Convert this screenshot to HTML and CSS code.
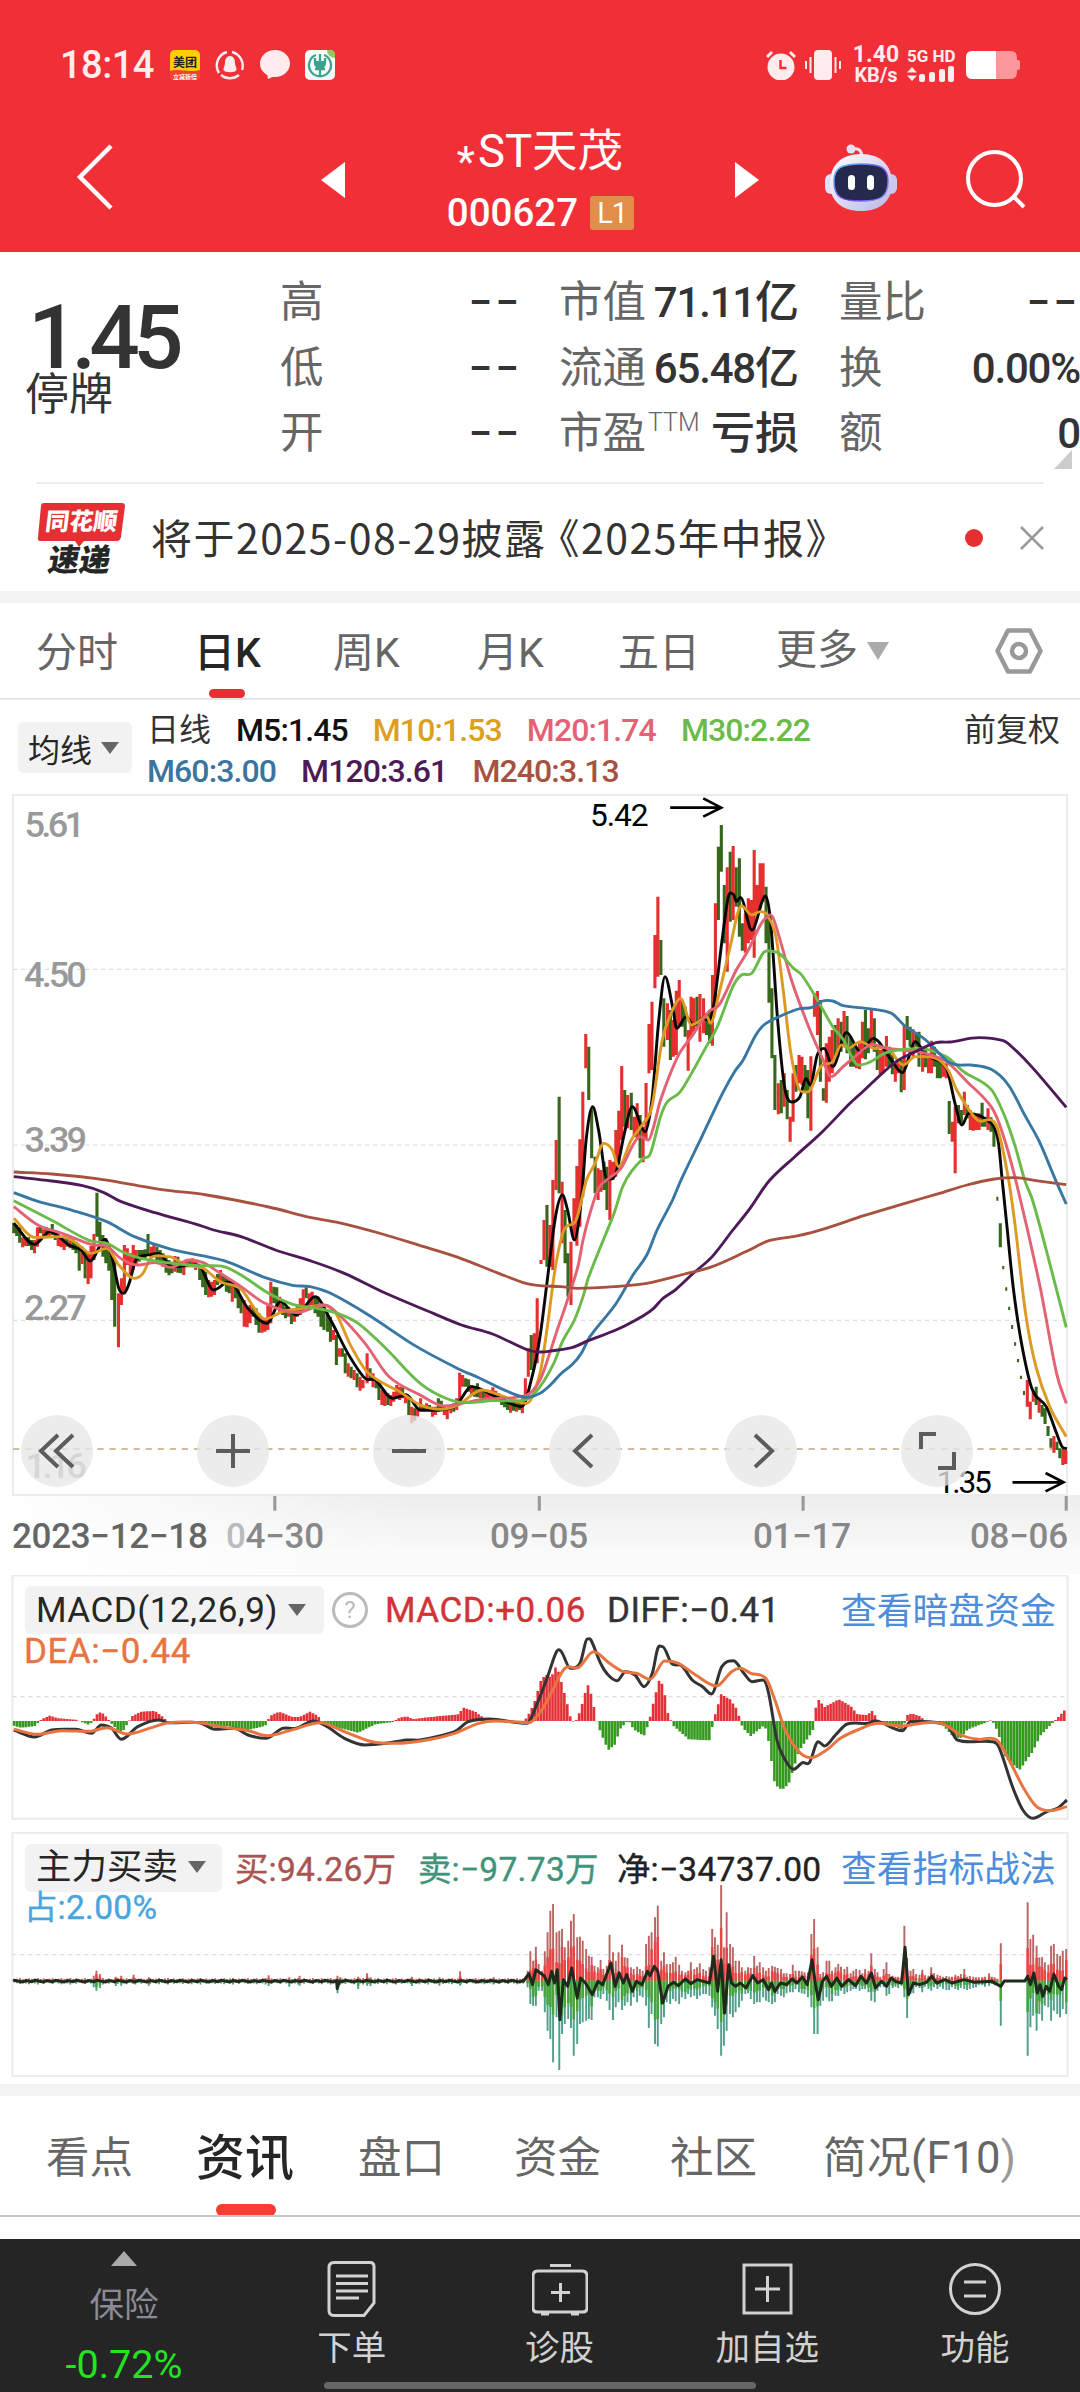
FILE: index.html
```html
<!DOCTYPE html>
<html lang="zh-CN">
    <head>
        <meta charset="utf-8">
        <meta name="viewport" content="width=device-width, initial-scale=1.0">
        <title>*ST天茂 000627</title>
        <link rel="stylesheet" href="styles.css">
    </head>
    <body>
        <header class="header">
            <div class="statusbar">
                <span class="clock">18:14</span>
                <svg class="app-icon" viewBox="0 0 30 30">
                    <rect width="30" height="30" rx="5" fill="#ffd000"/>
                    <path d="M0 21 C8 18 20 23 30 20 V25 a5 5 0 0 1-5 5 H5 a5 5 0 0 1-5-5z" fill="#f0432e"/>
                    <text x="15" y="16.5" font-size="12" font-weight="700" fill="#222" text-anchor="middle">美团</text>
                    <text x="15" y="28.5" font-size="6" font-weight="700" fill="#fff" text-anchor="middle">立减新倍</text>
                </svg>
                <svg class="app-icon" viewBox="0 0 30 30" fill="none" stroke="#ffecee" stroke-width="2.4">
                    <path d="M4 23 A14 14 0 0 1 12 2"/>
                    <path d="M17 2 A14 14 0 0 1 27 20"/>
                    <path d="M24 25 A14 14 0 0 1 6 25"/>
                    <path d="M15 6c-4 0-5 4-5 7 0 3-2 5-1.500 7 1 3 12 3 13 0 .5-2-1.500-4-1.500-7 0-3-1-7-5-7z" fill="#ffecee" stroke="none"/>
                </svg>
                <svg class="app-icon" viewBox="0 0 30 30">
                    <ellipse cx="15" cy="13.500" rx="15" ry="13.500" fill="#ffecee"/>
                    <path d="M7 23 L8 29 L17 25z" fill="#ffecee"/>
                </svg>
                <svg class="app-icon" viewBox="0 0 30 30">
                    <rect width="30" height="30" rx="5" fill="#f7fbfa"/>
                    <path d="M22 0h3a5 5 0 0 1 5 5v3a8 8 0 0 1-8-8z" fill="#8ccc5a"/>
                    <g fill="none" stroke="#3aa38f" stroke-width="2.300">
                        <path d="M11 5 A11 11 0 1 0 19 5"/>
                        <path d="M15 4V26M10 8v5q0 4 5 4t5-4V8M10 19h10"/>
                    </g>
                    <path d="M11 11h8v8h-8z" fill="#3aa38f"/>
                </svg>
                <span class="spacer"></span>
                <svg class="alarm" viewBox="0 0 30 30" fill="#ffecee">
                    <circle cx="15" cy="17" r="13.500"/>
                    <path d="M1 7 L6 2M29 7 L24 2" stroke="#ffecee" stroke-width="3"/>
                    <path d="M14.500 10v8h6" fill="none" stroke="#f12f37" stroke-width="2.500"/>
                </svg>
                <svg class="vibrate" viewBox="0 0 36 30" fill="#ffecee">
                    <rect x="9" y="0" width="18" height="30" rx="4"/>
                    <path d="M1 11v8M5.500 7v16M30.500 7v16M35 11v8" stroke="#ffecee" stroke-width="2"/>
                </svg>
                <span class="speed">1.40<br>KB/s</span>
                <div class="network">
                    <span>5G HD</span>
                    <svg viewBox="0 0 48 16" fill="#ffecee">
                        <path d="M0 6.500 5 1l5 5.500zM0 9.500 5 15l5-5.500z"/>
                        <rect x="12" y="8" width="6" height="8" rx="2"/>
                        <rect x="22" y="6" width="6" height="10" rx="2"/>
                        <rect x="32" y="3" width="6" height="13" rx="2"/>
                        <rect x="41" y="0" width="6" height="16" rx="2"/>
                    </svg>
                </div>
                <svg class="battery" viewBox="0 0 54 28">
                    <path d="M6 0h39q6 0 6 7v2h1q2 0 2 2v6q0 2-2 2h-1v2q0 7-6 7H6q-6 0-6-7V7Q0 0 6 0z" fill="#fa979b"/>
                    <path d="M30 0H6Q0 0 0 7v14q0 7 6 7h24z" fill="#fff"/>
                </svg>
            </div>
            <div class="titlebar">
                <svg class="back" viewBox="0 0 38 66"><path d="M35 2 4 33 35 64" fill="none" stroke="#fff" stroke-width="4.500"/></svg>
                <svg class="prev" viewBox="0 0 24 36"><path d="M24 0v36L0 18z" fill="#fff"/></svg>
                <div class="name">
                    <h1><span class="star">*</span>ST天茂</h1>
                    <p>000627<span class="level">L1</span></p>
                </div>
                <svg class="next" viewBox="0 0 24 36"><path d="M0 0v36l24-18z" fill="#fff"/></svg>
                <svg class="robot" viewBox="0 0 72 68">
                    <defs>
                        <linearGradient id="shell" x1="0" y1="0" x2="1" y2="1">
                            <stop offset="0" stop-color="#fff"/>
                            <stop offset="1" stop-color="#b9b6e6"/>
                        </linearGradient>
                        <linearGradient id="rim" x1="0" y1="0" x2="1" y2="1">
                            <stop offset="0" stop-color="#54cdf2"/>
                            <stop offset="0.600" stop-color="#7a3ff0"/>
                            <stop offset="1" stop-color="#8aa0ff"/>
                        </linearGradient>
                    </defs>
                    <path d="M27 5q9-2 10 7" fill="none" stroke="#e4e0f4" stroke-width="3"/>
                    <circle cx="26" cy="5" r="4.500" fill="#e4e0f4"/>
                    <rect x="0" y="30" width="12" height="20" rx="6" fill="#e2e2f6"/>
                    <rect x="60" y="30" width="12" height="20" rx="6" fill="#c9c8ee"/>
                    <path d="M36 10C56 10 67 21 67 40 67 57 55 67 36 67S5 57 5 40C5 21 16 10 36 10z" fill="url(#shell)"/>
                    <path d="M36 20c20 0 27 4 27 17 0 16-7 20-27 20S9 53 9 37c0-13 7-17 27-17z" fill="#232a4d" stroke="url(#rim)" stroke-width="1.500"/>
                    <rect x="23" y="31" width="7" height="15" rx="3.500" fill="#fff"/>
                    <rect x="42" y="31" width="7" height="15" rx="3.500" fill="#fff"/>
                </svg>
                <svg class="search" viewBox="0 0 60 60" fill="none" stroke="#fff" stroke-width="4"><circle cx="28.500" cy="28.500" r="26.500"/><path d="M48 47 58 57"/></svg>
            </div>
        </header>

        <section class="quote">
            <div class="price">
                <strong>1.45</strong>
                <span>停牌</span>
            </div>
            <dl class="stats">
                <dt>高</dt><dd class="empty">−−</dd>
                <dt>市值</dt><dd>71.11<i>亿</i></dd>
                <dt>量比</dt><dd class="empty">−−</dd>
                <dt>低</dt><dd class="empty">−−</dd>
                <dt>流通</dt><dd>65.48<i>亿</i></dd>
                <dt>换</dt><dd>0.00%</dd>
                <dt>开</dt><dd class="empty">−−</dd>
                <dt>市盈<sup>TTM</sup></dt><dd><i>亏损</i></dd>
                <dt>额</dt><dd>0</dd>
            </dl>
            <svg class="corner" viewBox="0 0 18 19"><path d="M18 0v19H0z" fill="#ccc"/></svg>
        </section>

        <section class="news">
            <svg class="news-logo" viewBox="0 0 90 74">
                <path d="M8 2h78q3 0 3 3l-4 31q-1 4-4 4H48l-5 6-4-6H5q-4 0-3-4L5 5q0-3 3-3z" fill="#e62f33"/>
                <text x="45" y="29" font-size="24" font-weight="900" fill="#fff" text-anchor="middle" transform="skewX(-7) translate(3 0)">同花顺</text>
                <text x="45" y="70" font-size="31" font-weight="900" fill="#262626" text-anchor="middle" transform="skewX(-10) translate(9 0)">速递</text>
            </svg>
            <p>将于2025-08-29披露<span class="title-mark">《2025年中报》</span></p>
            <span class="dot"></span>
            <svg class="close" viewBox="0 0 24 24"><path d="M1 1 23 23M23 1 1 23" stroke="#999" stroke-width="2.500"/></svg>
        </section>

        <nav class="periods">
            <a>分时</a>
            <a class="on">日K</a>
            <a>周K</a>
            <a>月K</a>
            <a>五日</a>
            <a class="more">更多<svg viewBox="0 0 22 18"><path d="M0 0h22L11 18z" fill="#aaa"/></svg></a>
            <svg class="setting" viewBox="0 0 48 46" fill="none" stroke="#999" stroke-width="4.500" stroke-linejoin="round"><path d="M13 2.500h22L45.500 23 35 43.500H13L2.500 23z"/><circle cx="24" cy="23" r="7"/></svg>
        </nav>

        <section class="averages">
            <div class="picker">均线<svg viewBox="0 0 18 12"><path d="M0 0h18L9 12z" fill="#666"/></svg></div>
            <div class="legend">
                <p><span class="cjk">日线</span><span class="m5">M5:1.45</span><span class="m10">M10:1.53</span><span class="m20">M20:1.74</span><span class="m30">M30:2.22</span></p>
                <p><span class="m60">M60:3.00</span><span class="m120">M120:3.61</span><span class="m240">M240:3.13</span></p>
            </div>
            <span class="adjust">前复权</span>
        </section>

        <section class="kline">
            <svg class="kline-chart" viewBox="0 42 3136 2160" preserveAspectRatio="none">
                <path class="frame" d="M38 45H3098V2145H38z"/>
                <path class="grid" d="M38 568H3098M38 1095H3098M38 1621H3098"/>
                <g class="scale">
                    <text x="71" y="170" textLength="176">5.61</text>
                    <text x="70" y="620" textLength="182">4.50</text>
                    <text x="71" y="1117" textLength="182">3.39</text>
                    <text x="70" y="1620" textLength="182">2.27</text>
                    <text x="74" y="2095" textLength="178">1.16</text>
                </g>
                <path class="last" d="M38 2007H3098"/>
                <path id="falls" class="falls"/>
                <path id="rises" class="rises"/>
                <g id="lines" class="lines"></g>
                <g class="extreme">
                    <text x="1713" y="138" textLength="170">5.42</text>
                    <path d="M1946 83H2092M2042 55 2094 83 2042 110"/>
                    <text x="2720" y="2138" textLength="160">1.35</text>
                    <path d="M2940 2107H3086M3036 2079 3088 2107 3036 2134"/>
                </g>
                <path class="ticks" d="M798 2148v44M1566 2148v44M2332 2148v44M3096 2148v44"/>
            </svg>
            <div class="tools">
                <button><svg viewBox="0 0 72 72"><path d="M37 20 20 36 37 52M52 20 35 36 52 52"/></svg></button>
                <button><svg viewBox="0 0 72 72"><path d="M36 19V53M19 36H53"/></svg></button>
                <button><svg viewBox="0 0 72 72"><path d="M19 36H53"/></svg></button>
                <button><svg viewBox="0 0 72 72"><path d="M43 20 26 36 43 52"/></svg></button>
                <button><svg viewBox="0 0 72 72"><path d="M30 20 47 36 30 52"/></svg></button>
                <button><svg viewBox="0 0 72 72"><path d="M20 34V19H35M37 53H53V37"/></svg></button>
            </div>
        </section>
        <div class="dates">
            <span class="first">2023−12−18</span>
            <span><b>0</b>4−30</span>
            <span>09−05</span>
            <span>01−17</span>
            <span>08−06</span>
        </div>

        <section class="indicator macd">
            <svg class="plot" viewBox="0 45 1568 735" preserveAspectRatio="none">
                <path class="frame" d="M18 46.500H1550V776H18z"/>
                <path class="grid" d="M18 410H1550"/>
                <path id="macdUp" class="bar-up"/>
                <path id="macdDown" class="bar-down"/>
                <path id="diff" class="diff"/>
                <path id="dea" class="dea"/>
            </svg>
            <div class="caption">
                <span class="picker">MACD(12,26,9)<svg viewBox="0 0 18 12"><path d="M0 0h18L9 12z" fill="#666"/></svg></span>
                <span class="help">?</span>
                <span class="v-macd">MACD:+0.06</span>
                <span class="v-diff">DIFF:−0.41</span>
                <a>查看暗盘资金</a>
            </div>
            <p class="v-dea">DEA:−0.44</p>
        </section>

        <section class="indicator flow">
            <svg class="plot" viewBox="0 37 1568 735" preserveAspectRatio="none">
                <path class="frame" d="M18 39H1550V770H18z"/>
                <path class="grid" d="M18 405H1550"/>
                <path id="buyAll" class="buy-all"/>
                <path id="sellAll" class="sell-all"/>
                <path id="buyBig" class="buy-big"/>
                <path id="sellBig" class="sell-big"/>
                <path id="net" class="net"/>
            </svg>
            <div class="caption">
                <span class="picker">主力买卖<svg viewBox="0 0 18 12"><path d="M0 0h18L9 12z" fill="#666"/></svg></span>
                <span class="v-buy"><i>买</i>:94.26<i>万</i></span>
                <span class="v-sell"><i>卖</i>:−97.73<i>万</i></span>
                <span class="v-net"><i>净</i>:−34737.00</span>
                <a>查看指标战法</a>
            </div>
            <p class="v-ratio"><i>占</i>:2.00%</p>
        </section>

        <nav class="tabs">
            <a>看点</a>
            <a class="on">资讯</a>
            <a>盘口</a>
            <a>资金</a>
            <a>社区</a>
            <a class="profile">简况(F10<span>)</span></a>
        </nav>

        <footer class="bottombar">
            <div class="sector">
                <svg viewBox="0 0 26 15"><path d="M13 0 26 15H0z" fill="#aaa"/></svg>
                <span>保险</span>
                <b>-0.72%</b>
            </div>
            <div class="item">
                <svg viewBox="0 0 56 56"><path d="M10 1.500h36q4 0 4 4V42L40 54.500H10q-5 0-5-5v-43q0-5 5-5zM12 15h32M12 22.500h32M12 30h32M12 37h23"/></svg>
                <span>下单</span>
            </div>
            <div class="item">
                <svg viewBox="0 0 56 56"><path d="M18 4.500h21M6 10h44q5 0 5 5v32q0 4-5 4H6q-5 0-5-4V15q0-5 5-5zM28.500 22v19M19 31.500h19M9 53h8M39 53h8"/></svg>
                <span>诊股</span>
            </div>
            <div class="item">
                <svg viewBox="0 0 56 56"><path d="M5 4h47v48H5zM28.500 15v26M16 28h25"/></svg>
                <span>加自选</span>
            </div>
            <div class="item">
                <svg viewBox="0 0 56 56"><circle cx="28" cy="28" r="24.500"/><path d="M17 21h22M17 35h22"/></svg>
                <span>功能</span>
            </div>
            <div class="home"></div>
        </footer>
        <script src="chart.js"></script>
    </body>
</html>
```
FILE: styles.css
```css
*{
    margin: 0;
    padding: 0;
    box-sizing: border-box;
}
body{
    width: 1080px;
    height: 2392px;
    overflow: hidden;
    background-color: #fff;
    color: #333;
    font-family: Roboto, "Noto Sans CJK SC", sans-serif;
}
svg{
    display: block;
}
i{
    font-style: normal;
    letter-spacing: 0;
}

/* header */
.header{
    height: 252px;
    background-color: #f12f37;
    color: #fff;
}
.statusbar{
    height: 130px;
    padding: 0 60px;
    display: flex;
    align-items: center;
    color: #ffecee;
}
.clock{
    width: 110px;
    font: 500 38px/1 Roboto, sans-serif;
    letter-spacing: -0.5px;
}
.app-icon{
    width: 30px;
    height: 30px;
    margin-right: 15px;
    font-family: "Noto Sans CJK SC", sans-serif;
}
.spacer{
    flex: 1;
}
.alarm{
    width: 30px;
    height: 30px;
    margin-right: 9px;
}
.vibrate{
    width: 36px;
    height: 30px;
    margin-right: 7px;
}
.speed{
    width: 56px;
    font: 700 20px/21px Roboto, sans-serif;
    text-align: center;
    margin-right: 3px;
}
.speed::first-line{
    font-size: 23px;
}
.network{
    width: 50px;
    margin-right: 9px;
    font: 700 17px/17px Roboto, sans-serif;
    white-space: nowrap;
}
.network svg{
    width: 48px;
    height: 16px;
    margin-top: 1px;
}
.battery{
    width: 54px;
    height: 28px;
}
.titlebar{
    height: 122px;
    display: grid;
    grid-template-columns: 245px 24px 390px 24px 66px 72px 69px 60px;
    align-items: center;
    padding-left: 76px;
}
.back{
    width: 38px;
    height: 66px;
    margin-top: -28px;
}
.prev, .next{
    width: 24px;
    height: 36px;
    margin-top: -22px;
}
.robot{
    grid-column: 6;
    height: 68px;
    margin-top: -26px;
}
.search{
    grid-column: 8;
    height: 60px;
    margin-top: -22px;
}
.name{
    text-align: center;
    margin-top: -14px;
}
.name h1{
    font: 400 45.500px/50px Roboto, "Noto Sans CJK SC", sans-serif;
    margin-top: -8px;
}
.star{
    font-size: 42px;
    position: relative;
    top: 9px;
    margin-right: 3px;
}
.name p{
    display: flex;
    justify-content: center;
    align-items: center;
    margin: 15px 0 0 1px;
    font: 500 38.500px/40px Roboto, sans-serif;
}
.level{
    width: 44px;
    height: 34px;
    margin-left: 12px;
    border-radius: 3px;
    background-color: #e28d4a;
    font: 400 29px/35px Roboto, sans-serif;
    letter-spacing: -1px;
}

/* quote */
.quote{
    position: relative;
    height: 232px;
    display: flex;
    padding-top: 18px;
}
.quote::after{
    content: "";
    position: absolute;
    left: 36px;
    right: 36px;
    bottom: 0;
    border-bottom: 2px solid #ededed;
}
.price{
    width: 280px;
    padding-top: 28px;
}
.price strong{
    display: block;
    padding-left: 28px;
    font: 500 89px/79px Roboto, sans-serif;
    letter-spacing: -7px;
}
.price span{
    display: block;
    padding-left: 25px;
    font-size: 44px;
    line-height: 44px;
    margin-top: -4px;
}
.stats{
    width: 800px;
    display: grid;
    grid-template-columns: 88px 191px 145px 95px 128px 153px;
    grid-auto-rows: 65.5px;
    line-height: 66px;
}
.stats dt{
    font-size: 43.500px;
    color: #666;
    white-space: nowrap;
}
.stats dt:nth-of-type(3n){
    padding-left: 40px;
}
.stats dd{
    font-size: 42px;
    font-weight: 500;
    letter-spacing: -1.2px;
    white-space: nowrap;
    display: flex;
    justify-content: flex-end;
}
.stats dd:nth-of-type(3n+1){
    padding-right: 42px;
}
.stats .empty{
    letter-spacing: 3px;
}
.stats .empty:nth-of-type(3n+1){
    padding-right: 37px;
}
.stats dd i{
    font-size: 44px;
    letter-spacing: 0;
}
.stats sup{
    font-size: 25px;
    font-weight: 300;
    line-height: 0;
    position: relative;
    top: -2px;
    left: 2px;
}
.corner{
    position: absolute;
    right: 8px;
    bottom: 15px;
    width: 18px;
    height: 19px;
}

/* news */
.news{
    height: 107px;
    display: flex;
    align-items: center;
    padding: 0 36px;
}
.news-logo{
    width: 90px;
    height: 74px;
    font-family: "Noto Sans CJK SC", sans-serif;
}
.news p{
    flex: 1;
    padding-left: 25px;
    margin-top: -4px;
    font: 400 41px/60px "Noto Sans CJK SC", sans-serif;
    letter-spacing: 1.5px;
    white-space: nowrap;
}
.title-mark{
    margin-left: -8px;
}
.dot{
    width: 18px;
    height: 18px;
    border-radius: 50%;
    background-color: #e62f33;
    margin-right: 37px;
}
.close{
    width: 24px;
    height: 24px;
}

/* period tabs */
.periods{
    height: 109px;
    border-top: 12px solid #f4f4f4;
    border-bottom: 2px solid #e6e6e6;
    display: grid;
    grid-template-columns: 158px 139px 144px 141px 158px 219px 48px;
    align-items: center;
    padding-left: 36px;
    font-size: 41px;
    color: #666;
}
.periods a{
    position: relative;
    height: 95px;
    line-height: 101px;
    white-space: nowrap;
}
.periods .on{
    font-weight: 500;
    color: #262626;
}
.periods .on::after{
    content: "";
    position: absolute;
    left: 15px;
    bottom: 0;
    width: 36px;
    height: 9px;
    border-radius: 5px;
    background-color: #e62f33;
}
.more{
    display: flex;
    align-items: center;
}
.more svg{
    width: 22px;
    height: 18px;
    margin-left: 9px;
}
.setting{
    width: 48px;
    height: 46px;
}

/* moving averages */
.averages{
    height: 94px;
    display: flex;
    padding-left: 18px;
    font-size: 32px;
}
.picker{
    display: flex;
    align-items: center;
    border-radius: 6px;
    background-color: #f2f2f2;
    color: #262626;
}
.picker svg{
    width: 18px;
    height: 12px;
}
.averages .picker{
    width: 114px;
    height: 51px;
    margin: 22px 15px 0 0;
    padding-left: 10px;
}
.averages .picker svg{
    margin-left: 9px;
}
.legend{
    flex: 1;
    padding-top: 10px;
}
.legend p{
    display: flex;
    gap: 25px;
    height: 41px;
    line-height: 41px;
    font-weight: 500;
    letter-spacing: -0.9px;
    white-space: nowrap;
}
.cjk{
    font-size: 32px;
    font-weight: 400;
    letter-spacing: 0;
}
.m5{ color: #111; }
.m10{ color: #dd9f22; }
.m20{ color: #e36375; }
.m30{ color: #6bbb4b; }
.m60{ color: #39759f; }
.m120{ color: #4d1a57; }
.m240{ color: #a8513f; }
.adjust{
    padding: 10px 20px 0 0;
    font-size: 32px;
    line-height: 41px;
}

/* candles */
.kline{
    position: relative;
    height: 701px;
}
.kline-chart{
    position: relative;
    z-index: 1;
    width: 1080px;
    height: 720px;
}
.frame{
    fill: none;
    stroke: #ebebeb;
    stroke-width: 2;
    vector-effect: non-scaling-stroke;
}
.grid{
    stroke: #dedede;
    stroke-width: 1.2;
    stroke-dasharray: 4 4;
    vector-effect: non-scaling-stroke;
}
.scale{
    font-size: 105px;
    font-weight: 500;
    fill: #999;
}
.last{
    stroke: #c4a57b;
    stroke-width: 5;
    stroke-dasharray: 18 17;
}
.rises{ fill: #e62f2f; }
.falls{ fill: #37671b; }
.lines path{
    fill: none;
    stroke-width: 8.5;
    stroke-linejoin: round;
}
.extreme{
    font-size: 92px;
    fill: #000;
}
.extreme path{
    fill: none;
    stroke: #000;
    stroke-width: 8;
}
.ticks{
    stroke: #999;
    stroke-width: 9;
}
.tools{
    position: absolute;
    z-index: 2;
    left: 21px;
    top: 621px;
    display: flex;
    gap: 104px;
}
.tools button{
    width: 72px;
    height: 72px;
    border: 0;
    border-radius: 50%;
    background-color: rgba(231,231,231,0.78);
}
.tools path{
    fill: none;
    stroke: #5c5c5c;
    stroke-width: 4;
}
.dates{
    height: 79px;
    padding: 17px 12px 0;
    display: grid;
    grid-template-columns: 214px 264px 263px 217px 95px;
    background: linear-gradient(90deg, #fff, rgba(255,255,255,0) 420px), linear-gradient(#ededed, #fafafa 75%);
    font-size: 35px;
    font-weight: 500;
    line-height: 50px;
    letter-spacing: -0.3px;
    color: #888;
    white-space: nowrap;
}
.dates b{
    color: #bbb;
    font-weight: 500;
}
.dates .first{
    color: #666;
}

/* indicator panels */
.indicator{
    position: relative;
    height: 259px;
    font-size: 33.500px;
}
.plot{
    position: absolute;
    left: 0;
    top: 1px;
    width: 1080px;
    height: 245px;
}
.caption{
    position: relative;
    height: 48px;
    margin: 0 25px;
    top: 12px;
    display: grid;
    align-items: center;
    white-space: nowrap;
}
.caption .picker{
    height: 48px;
    padding-left: 11px;
}
.caption .picker svg{
    margin-left: 10px;
}
.caption a{
    color: #4d8ddc;
    font-size: 35.800px;
    margin-top: -4px;
}
.macd .caption{
    grid-template-columns: 307px 53px 222px 234px 214px;
}
.macd .picker{
    width: 299px;
    font-size: 35px;
    letter-spacing: 0.5px;
}
.help{
    width: 36px;
    height: 36px;
    border: 3px solid #bbb;
    border-radius: 50%;
    font-size: 24px;
    line-height: 31px;
    text-align: center;
    color: #bbb;
}
.indicator p{
    position: relative;
    top: 8px;
    margin-left: 24px;
    line-height: 44px;
}
.v-macd{ color: #d33336; }
.v-diff{ color: #333; }
.v-dea{ color: #e87440; }
.v-macd, .v-diff, .v-dea{
    font-size: 35px;
    letter-spacing: 0.5px;
    -webkit-text-stroke: 0.4px;
}
.v-buy{ color: #a95451; }
.v-sell{ color: #41937a; }
.v-net{ color: #222; }
.v-ratio{ color: #49a6dd; }
.v-buy, .v-sell, .v-net, .v-ratio{
    letter-spacing: 0.3px;
    margin-top: -3px;
    -webkit-text-stroke: 0.4px;
}
.flow{
    height: 251px;
}
.flow .plot{
    top: -1px;
}
.flow .caption{
    top: 11px;
    grid-template-columns: 210px 183px 199px 224px 214px;
}
.flow .picker{
    width: 197px;
    font-size: 35.500px;
    line-height: 44px;
    padding-bottom: 3px;
}
.flow .picker svg{
    margin-left: 10px;
}
.bar-up{ stroke: #e33237; }
.bar-down{ stroke: #35991f; }
.bar-up, .bar-down{
    stroke-width: 3.8;
}
.diff, .dea, .net{
    fill: none;
    stroke-width: 3;
    stroke-linejoin: round;
    vector-effect: non-scaling-stroke;
}
.diff{ stroke: #333; }
.dea{ stroke: #e87440; }
.net{ stroke: #1e2a1c; }
.buy-all{ stroke: #bb6563; stroke-width: 2.8; }
.sell-all{ stroke: #4f9f8a; stroke-width: 2.8; }
.buy-big{ stroke: #ea4444; stroke-width: 3.6; }
.sell-big{ stroke: #45a53a; stroke-width: 3.6; }

/* content tabs */
.tabs{
    height: 155px;
    border-top: 12px solid #f4f4f4;
    padding-left: 46px;
    display: grid;
    grid-template-columns: 150px 162px 156px 156px 153px 200px;
    font-size: 43.500px;
    color: #666;
    position: relative;
}
.tabs::after{
    content: "";
    position: absolute;
    left: 0;
    right: 0;
    top: 119px;
    border-top: 2px solid #c8c8c8;
}
.tabs a{
    position: relative;
    height: 120px;
    line-height: 126px;
    white-space: nowrap;
}
.tabs a span{
    color: #999;
}
.tabs .profile{
    letter-spacing: 0.5px;
}
.tabs .on{
    font-size: 49px;
    font-weight: 500;
    color: #262626;
}
.tabs .on::after{
    content: "";
    position: absolute;
    left: 20px;
    bottom: 0;
    width: 60px;
    height: 12px;
    border-radius: 6px;
    background-color: #fa3c32;
}

/* bottom bar */
.bottombar{
    position: relative;
    height: 153px;
    background-color: #252525;
    display: grid;
    grid-template-columns: 248px repeat(4, 207.700px);
    color: #d2d2d2;
    font-size: 34.500px;
}
.sector, .item{
    display: flex;
    flex-direction: column;
    align-items: center;
}
.sector svg{
    width: 26px;
    height: 15px;
    margin-top: 12px;
}
.sector span{
    margin-top: 16px;
    line-height: 46px;
    color: #8b8b96;
}
.sector b{
    margin-top: 15px;
    font: 400 39.500px/44px Roboto, sans-serif;
    color: #23e323;
}
.item svg{
    width: 56px;
    height: 56px;
    margin-top: 22px;
    fill: none;
    stroke: #d2d2d2;
    stroke-width: 3;
}
.item span{
    margin-top: 8px;
    line-height: 46px;
}
.home{
    position: absolute;
    left: 324px;
    bottom: 3px;
    width: 432px;
    height: 7px;
    border-radius: 4px;
    background-color: #666;
}
```
FILE: chart.js
```js
// candles: start x, y offset, then one "colour top-bottom" per trading day
const STEP = 8.59;
const candles = [
    [40, 1110, "g218-250 g225-258 g232-278 r262-292 r265-288 g262-288 g270-300 r270-310 r232-290 g230-250"],
    [126, 1110, "r238-262 g232-258 r238-262 g222-255 g240-270 r250-288 r260-292 r265-300 g265-290 r262-295 g268-300 g275-310"],
    [230, 1110, "g285-362 r290-342 g300-385 r310-402 r288-385 r252-330 g128-260 g215-275 g255-320 g265-340 g280-362 g300-450 g330-530"],
    [344, 1110, "r430-592 r385-465 r285-430 r295-345 r310-380 r285-360 r300-345 g300-335 g300-330 g298-325 g252-318 r290-325 r282-322 g290-330"],
    [465, 1110, "g300-335 g310-350 g318-368 g330-376 g335-370 r318-365 g320-368 g335-370 r335-375 r328-350 g330-352 r325-348 r335-360"],
    [580, 1110, "g345-390 g350-412 g365-435 r390-442 r395-440 r390-435 g372-405 r360-400 g375-405 g385-425 g395-430 r395-455 g405-445 g415-475 g440-490"],
    [709, 1110, "r450-530 r470-532 r465-520 g470-500 g475-525 g490-548 r505-548 r505-545 r462-540 r395-520 g410-460 g412-470 r440-490 g450-495"],
    [829, 1110, "g470-505 r470-500 g480-522 r475-515 r465-500 r445-495 r418-480 g412-445 r430-470 r425-465 g440-490 g440-500 g470-530 g480-540"],
    [951, 1110, "g490-545 g500-575 r540-570 g555-645 r595-620 g595-620 g610-670 r640-680 g650-685 r660-690 g670-712 r680-722 r690-715"],
    [1066, 1110, "r610-700 g655-690 r670-712 g690-715 g690-750 r720-765 r725-768 g730-765 r735-768 r725-755 r705-745 r710-750 g712-745 r730-760"],
    [1187, 1110, "g740-795 r770-820 g775-812 r770-800 r745-785 g765-785 r760-785 g765-785 r770-800 r770-795 g745-785 g752-780 r765-795 r775-808"],
    [1309, 1110, "r765-790 g760-785 r745-780 r668-755 r675-710 g685-710 g688-725 r705-735 g712-740 g700-742 r718-745 g722-745 r720-745 r720-745"],
    [1431, 1110, "r712-745 r722-750 g730-755 g735-765 g742-772 g750-780 r752-788 g755-782 r755-785 g755-780 r745-790 r685-765 r595-680 g555-660 r550-650 r445-640"],
    [1571, 1110, "r330-342 r210-330 g165-350 r225-350 r90-360"],
    [1615, 0, "r1080-1230 g950-1240 r1205-1390 g1290-1450 g1420-1550 r1385-1575 r1255-1380 r1158-1397 r1078-1340 r935-1250 r762-865 g800-960 g985-1135"],
    [1728, 0, "g1130-1240 r1165-1260 r1170-1235 g1145-1230 g1160-1290 r1140-1320 r1145-1200 r1050-1190 r992-1160 r858-1080 g930-1040 r945-1045"],
    [1833, 0, "g938-1050 r1010-1070 r970-1080 g1005-1135 r1040-1147 r909-1080 r732-880 r665-870 r465-625 r350-590 g480-585 g655-800"],
    [1938, 0, "r670-780 g690-840 r720-830 r632-825 r600-735 g660-740 g680-770 r750-872 r650-770 r655-755 g650-740 r642-785"],
    [2043, 0, "r655-760 g700-765 g690-790 r585-797 r370-690 g200-420 g135-275 g315-490 r262-575 g215-425 r198-420 g262-380"],
    [2147, 0, "g235-470 g430-512 r400-518 r355-490 r360-480 r210-533 r315-400 r250-385 r250-365 g320-490 g415-668 g625-835 g825-990"],
    [2260, 0, "r910-1003 g900-1000 r880-980 g930-1018 r1010-1085 r880-1025 g855-935 r825-910 r830-915 g855-935 g870-1015 r829-1052"],
    [2365, 0, "r640-710 r633-765 g660-905 g925-962 r790-968 r770-905 r750-880 g735-840 r715-830 g725-815 r693-800 g708-820"],
    [2470, 0, "g770-860 g790-860 r800-865 r790-868 r725-835 g690-838 g745-820 r690-805 g715-815 g795-870 r810-885 r800-880"],
    [2574, 0, "r768-860 g800-860 g824-883 r850-905 r840-880 g840-937 r735-930 g708-780 g740-800 r748-830 g760-800 g755-860"],
    [2679, 0, "r800-875 g810-862 r820-880 r782-880 g800-860 g830-895 g840-895 r850-890 r850-895 g963-1062 r1025-1085 r980-1180"],
    [2783, 0, "g975-1030 g990-1035 r935-1005 g975-1015 r990-1050 r1000-1052 r1005-1050 r1000-1050 g968-1040 g1010-1040 r985-1050 g1012-1055 g1040-1100"],
    [2896, 1110, "s140-152 g220-292 s348-358 s412-422 s470-480 s525-537 s577-587 s627-637 s677-687 s723-735"],
    [2983, 1110, "r690-770 r755-808 r725-755 g710-765 r745-788 g765-800 g775-822 g828-858 g865-893 r858-908 g875-900 g895-925 r898-945 r900-942"]
];

const averages = {
    "#080808": "40,1330 100,1393 145,1355 200,1395 235,1410 262,1443 305,1378 325,1430 345,1525 360,1540 375,1510 395,1440 430,1425 460,1420 500,1460 575,1455 620,1530 665,1505 720,1585 775,1630 815,1565 860,1605 915,1550 960,1620 1010,1720 1060,1795 1090,1800 1140,1855 1180,1845 1220,1890 1320,1880 1370,1820 1440,1850 1515,1880 1545,1790 1568,1670 1588,1510 1613,1310 1633,1245 1648,1290 1668,1380 1688,1260 1703,1070 1721,980 1738,1050 1763,1197 1788,1180 1813,1060 1836,980 1873,1055 1893,960 1913,720 1931,590 1953,680 1965,745 1993,710 2013,735 2038,715 2068,700 2098,470 2115,350 2130,343 2138,365 2150,352 2183,450 2223,348 2238,430 2258,720 2278,920 2298,966 2323,950 2340,895 2353,915 2373,825 2393,805 2418,860 2458,757 2498,815 2536,775 2588,840 2620,878 2658,785 2688,825 2748,865 2773,970 2793,1035 2813,1000 2878,1030 2898,1080 2910,1199 2923,1330 2943,1530 2968,1700 2998,1830 3038,1880 3068,1960 3084,2000 3098,2006",
    "#dd9a22": "40,1315 100,1372 180,1370 220,1388 265,1420 310,1405 345,1455 390,1495 415,1480 440,1432 490,1430 540,1455 590,1465 640,1505 700,1528 770,1617 820,1595 880,1585 940,1575 975,1600 1020,1700 1070,1780 1160,1835 1220,1875 1280,1888 1330,1875 1400,1830 1450,1845 1530,1870 1568,1780 1588,1650 1613,1460 1638,1350 1673,1320 1703,1200 1728,1150 1753,1090 1778,1110 1796,1160 1833,1080 1868,1030 1893,980 1923,780 1953,690 1976,655 2008,735 2053,710 2063,730 2088,640 2118,510 2153,378 2183,405 2208,395 2228,405 2253,470 2273,620 2298,830 2328,935 2353,930 2383,860 2418,845 2443,795 2463,805 2498,785 2538,805 2578,805 2623,855 2658,830 2718,835 2753,870 2778,930 2838,1020 2878,1020 2898,1050 2928,1195 2948,1340 2978,1600 3008,1760 3048,1880 3096,1970",
    "#e36375": "40,1280 110,1335 180,1360 270,1395 310,1398 350,1435 400,1455 450,1448 495,1462 550,1440 590,1448 640,1480 700,1520 770,1570 860,1598 940,1575 990,1610 1060,1690 1130,1790 1220,1845 1290,1878 1400,1858 1530,1845 1568,1800 1593,1730 1618,1650 1643,1575 1678,1460 1693,1380 1713,1300 1738,1225 1768,1195 1803,1165 1838,1095 1858,1070 1883,1080 1898,1040 1918,960 1968,830 2008,770 2058,695 2088,675 2138,570 2173,510 2208,435 2228,410 2243,410 2268,490 2298,600 2348,740 2388,835 2413,890 2448,860 2488,825 2533,793 2568,803 2618,810 2688,820 2748,845 2808,905 2878,980 2908,1050 2948,1195 3018,1510 3068,1780 3096,1870",
    "#6bbb4b": "40,1262 150,1321 260,1382 310,1390 360,1418 410,1435 500,1450 580,1457 650,1460 700,1485 780,1540 850,1573 920,1585 980,1600 1040,1630 1120,1705 1220,1810 1300,1857 1360,1868 1430,1862 1530,1858 1568,1820 1608,1750 1633,1685 1668,1620 1693,1550 1708,1495 1748,1390 1783,1300 1808,1220 1833,1175 1868,1135 1888,1122 1918,1010 1938,965 1973,938 2008,880 2048,805 2083,740 2128,620 2153,585 2183,580 2218,517 2248,515 2308,568 2328,585 2368,650 2418,740 2448,778 2493,855 2528,845 2568,820 2608,810 2668,806 2748,830 2798,875 2878,928 2918,1010 2948,1100 2975,1199 2998,1260 3038,1410 3096,1642",
    "#3977a3": "40,1238 110,1264 210,1291 310,1325 390,1370 500,1409 650,1442 770,1493 850,1516 900,1520 960,1540 1070,1605 1210,1700 1330,1766 1390,1793 1460,1828 1530,1852 1568,1840 1598,1815 1628,1782 1663,1752 1688,1720 1713,1670 1788,1572 1838,1485 1878,1425 1908,1350 1953,1260 1978,1199 2038,1070 2063,1015 2098,940 2133,875 2158,840 2193,768 2218,735 2258,712 2318,687 2358,682 2388,663 2418,663 2448,677 2528,687 2588,700 2628,738 2688,780 2753,845 2783,855 2818,855 2878,868 2928,915 2978,1010 3018,1085 3063,1195 3096,1272",
    "#4d1a57": "40,1190 150,1203 240,1217 300,1237 350,1264 450,1298 580,1336 620,1350 700,1370 800,1410 900,1442 1000,1480 1120,1540 1260,1601 1340,1635 1430,1662 1530,1709 1568,1716 1598,1713 1663,1702 1708,1682 1793,1648 1868,1607 1898,1585 1923,1557 1963,1528 2013,1480 2068,1430 2128,1350 2178,1285 2233,1203 2308,1130 2388,1055 2468,970 2508,932 2538,903 2598,848 2648,820 2718,788 2758,786 2843,773 2913,782 2938,800 2998,863 3096,982",
    "#a8513f": "40,1176 150,1182 280,1196 380,1213 470,1229 600,1245 780,1281 900,1312 980,1327 1100,1359 1230,1400 1330,1432 1450,1481 1530,1511 1568,1517 1628,1520 1678,1525 1783,1520 1878,1510 1988,1482 2068,1460 2168,1414 2233,1382 2318,1367 2398,1345 2508,1307 2628,1270 2728,1240 2808,1215 2888,1197 2948,1193 3008,1202 3096,1214"
};

// x,height pairs, positive is above zero
const macd = "20,-14 30,-20 50,-16 60,5 72,16 85,8 110,4 130,-12 136,5 143,27 150,22 158,3 165,-15 176,-38 184,-12 192,15 205,28 225,30 238,10 243,-3 290,-3 310,-20 330,-15 357,-28 385,-15 392,15 405,28 425,12 435,12 450,28 462,15 468,-5 490,-20 520,-35 545,-10 570,-3 580,10 590,14 600,6 625,12 665,20 673,40 690,28 705,5 730,3 760,-3 766,15 775,50 785,120 792,140 800,130 808,168 816,110 825,40 830,-4 838,5 845,50 853,112 860,70 865,10 872,-35 883,-88 893,-70 900,-25 912,3 920,-25 935,-45 942,-5 948,50 958,130 964,95 970,20 978,-15 1000,-55 1030,-58 1037,10 1047,80 1060,65 1070,35 1078,-20 1090,-45 1110,-12 1115,-50 1125,-190 1135,-207 1145,-190 1160,-90 1180,-30 1183,30 1188,65 1197,42 1218,65 1235,45 1245,20 1260,18 1265,33 1275,3 1310,-25 1318,20 1325,22 1335,15 1345,-2 1370,-15 1385,-50 1395,-50 1405,-25 1430,-6 1440,4 1448,-30 1460,-110 1480,-148 1500,-90 1510,-45 1525,-12 1535,8 1548,38";
const diff = "20,510 50,531 75,510 110,508 133,520 147,495 162,505 176,538 200,500 230,480 245,488 290,488 312,508 340,505 360,525 386,535 410,505 430,505 455,483 475,500 500,535 530,555 560,550 590,540 610,540 660,515 680,485 710,477 765,490 780,430 795,350 808,275 815,275 828,325 842,310 853,237 858,240 872,310 883,345 896,362 908,335 922,345 935,380 947,340 955,265 962,260 975,310 990,318 1005,360 1020,380 1033,402 1048,320 1065,302 1080,340 1092,365 1108,360 1116,400 1128,540 1140,600 1152,628 1165,608 1175,608 1188,545 1197,558 1213,525 1230,492 1260,490 1270,483 1310,512 1322,485 1375,495 1390,540 1440,545 1450,560 1470,680 1485,750 1500,775 1520,755 1535,745 1549,720";
const dea = "20,508 55,523 90,512 130,514 155,503 185,522 220,503 245,488 290,488 320,500 360,512 388,527 420,512 465,488 500,515 540,545 575,550 620,540 660,520 695,490 720,483 768,488 785,455 800,400 820,325 840,322 862,275 885,310 905,335 925,340 944,358 965,303 985,310 1010,345 1040,378 1062,335 1075,325 1090,340 1112,355 1125,420 1140,510 1160,575 1178,593 1200,570 1220,535 1245,510 1275,490 1310,498 1345,488 1370,492 1395,525 1420,538 1447,540 1465,600 1485,680 1505,740 1525,752 1549,740";

// x,buy,sell
const flow = "136,15,20 140,30,30 145,20,22 168,12,16 176,15,15 194,18,10 216,10,15 390,16,16 420,10,18 435,15,15 490,15,38 494,10,12 520,12,25 533,22,15 538,10,16 598,12,16 638,10,15 668,28,15 717,10,10 766,30,20 770,88,70 774,60,75 778,102,75 782,50,30 787,30,30 791,88,95 795,145,150 799,210,175 803,230,245 808,145,110 812,150,268 816,155,160 820,100,130 825,120,115 829,180,142 833,200,225 838,130,190 842,132,130 846,120,125 851,95,120 855,75,115 859,72,118 863,45,50 868,40,50 872,62,55 876,35,40 881,45,60 885,138,88 890,85,118 894,60,80 898,85,65 903,108,88 907,70,75 911,68,65 916,40,75 920,35,50 925,42,65 929,35,45 933,30,50 938,110,75 942,135,142 946,145,100 951,190,190 955,225,197 960,60,130 964,85,110 968,50,65 973,50,70 977,55,55 981,72,62 986,48,70 990,30,50 995,25,55 999,30,40 1003,55,50 1008,35,45 1012,40,55 1016,52,45 1021,35,40 1025,30,40 1030,40,45 1034,155,80 1038,130,105 1042,108,145 1047,287,225 1051,100,195 1055,205,150 1060,110,100 1064,100,110 1068,60,95 1073,60,80 1077,40,60 1082,30,40 1086,40,38 1090,38,55 1095,75,70 1099,45,65 1103,55,65 1108,40,50 1112,30,60 1116,38,65 1121,45,70 1125,42,65 1129,38,40 1134,35,45 1138,22,50 1142,22,38 1147,20,35 1151,48,35 1155,30,25 1160,30,35 1164,28,38 1168,25,40 1173,25,50 1178,140,80 1182,185,160 1187,100,160 1191,20,75 1195,25,60 1200,60,50 1204,60,62 1208,30,62 1213,40,45 1217,50,45 1221,42,30 1226,35,40 1230,42,35 1235,22,30 1239,30,25 1243,35,25 1248,32,30 1252,22,25 1256,35,25 1261,30,35 1265,82,60 1270,35,65 1274,25,30 1278,12,20 1283,35,20 1287,55,45 1291,20,40 1296,15,22 1300,12,18 1304,12,22 1309,15,15 1313,165,50 1317,68,112 1322,30,40 1326,35,38 1330,20,20 1335,18,22 1339,33,35 1343,16,18 1348,15,25 1352,40,30 1356,22,20 1361,18,25 1365,15,18 1369,12,25 1374,14,28 1378,12,28 1382,12,20 1387,18,25 1391,14,28 1395,20,22 1400,35,25 1404,12,28 1408,14,25 1413,12,22 1417,10,20 1421,10,14 1426,10,14 1430,12,18 1436,22,15 1440,12,10 1444,10,14 1448,6,10 1453,112,135 1492,235,225 1496,125,140 1500,138,105 1505,105,150 1509,70,100 1513,70,120 1517,55,75 1522,48,80 1526,105,120 1530,110,90 1535,80,100 1539,75,110 1543,90,85 1548,95,100";
const net = "760,484 768,462 773,495 778,450 790,468 796,495 801,455 805,490 809,450 813,600 818,480 824,500 830,445 838,535 843,475 850,490 860,525 868,485 875,495 887,430 893,500 899,460 905,490 910,465 918,515 924,485 932,495 940,455 944,468 950,440 955,455 962,550 970,500 978,488 985,498 995,478 1003,492 1012,480 1030,490 1036,410 1042,515 1047,420 1052,580 1058,435 1062,490 1068,500 1075,490 1083,505 1093,468 1100,490 1108,480 1116,510 1120,490 1125,515 1133,490 1142,495 1150,478 1157,490 1165,472 1172,495 1179,420 1184,495 1188,540 1194,485 1200,470 1207,500 1215,475 1222,500 1232,480 1242,498 1250,470 1258,490 1265,460 1271,505 1280,485 1287,500 1294,475 1300,485 1309,490 1314,383 1319,525 1326,490 1335,495 1345,488 1353,470 1360,490 1372,480 1382,490 1400,480 1415,488 1440,485 1453,500 1458,484 1488,484 1492,470 1496,495 1501,460 1506,520 1510,495 1514,530 1519,500 1524,515 1530,463 1537,500 1541,510 1546,475 1549,480";

const parse = text => text.split(" ").map(p => p.split(",").map(Number));
const setPath = (id, d) => document.getElementById(id).setAttribute("d", d);

// curve through every point, flat at peaks and dips so it never overshoots
function curve(text) {
    const p = parse(text);
    const slope = i => {
        const a = p[Math.max(i - 1, 0)], b = p[Math.min(i + 1, p.length - 1)], c = p[i];
        if ((c[1] - a[1]) * (b[1] - c[1]) < 0) return 0;
        return (b[1] - a[1]) / (b[0] - a[0]);
    };
    let d = "M" + p[0];
    for (let i = 1; i < p.length; i++) {
        const w = (p[i][0] - p[i - 1][0]) / 3;
        d += `C${p[i - 1][0] + w},${p[i - 1][1] + slope(i - 1) * w} ${p[i][0] - w},${p[i][1] - slope(i) * w} ${p[i]}`;
    }
    return d;
}

let up = "", down = "";
candles.forEach(([x, dy, days]) => {
    days.split(" ").forEach((day, i) => {
        const [top, bottom] = day.slice(1).split("-").map(n => Number(n) + dy);
        const w = day[0] == "s" ? 6 : 9;
        const d = `M${x + i * STEP - w / 2} ${top}h${w}V${bottom}h${-w}z`;
        if (day[0] == "r") up += d;
        else down += d;
    });
});
setPath("rises", up);
setPath("falls", down);

const lines = document.getElementById("lines");
for (const color in averages) {
    const path = document.createElementNS("http://www.w3.org/2000/svg", "path");
    path.setAttribute("d", curve(averages[color]));
    path.setAttribute("stroke", color);
    lines.appendChild(path);
}

// macd histogram
const knots = parse(macd);
let macdUp = "", macdDown = "";
for (let x = 20.5; x < 1549; x += STEP / 2) {
    const k = Math.max(knots.findIndex(q => q[0] >= x), 1);
    const a = knots[k - 1], b = knots[k];
    const h = a[1] + (b[1] - a[1]) * (x - a[0]) / (b[0] - a[0]);
    if (h > 0) macdUp += `M${x} 483V${483 - h}`;
    else macdDown += `M${x} 483V${483 - h}`;
}
setPath("macdUp", macdUp);
setPath("macdDown", macdDown);
setPath("diff", curve(diff));
setPath("dea", curve(dea));

// buy and sell volume, quiet days first
let buyAll = "", sellAll = "", buyBig = "", sellBig = "", quiet = "M20 484";
for (let x = 20.5, i = 0; x < 760; x += STEP / 2, i++) {
    const n = (i * 37 % 11) / 11;
    buyAll += `M${x} 483v${-4 - n * 4}`;
    sellAll += `M${x} 483v${5 + n * 7}`;
    buyBig += `M${x} 483v-3`;
    sellBig += `M${x} 483v5`;
    quiet += `L${x} ${482 + (i * 23 % 7) * 0.8}`;
    if (Math.abs(x - 490) < 2) quiet += `L${x + 1} 507`;
}
parse(flow).forEach(([x, buy, sell], i) => {
    const part = 0.35 + (i * 29 % 10) / 30;
    buyAll += `M${x} 483v${-buy}`;
    sellAll += `M${x} 483v${sell}`;
    buyBig += `M${x} 483v${-buy * part}`;
    sellBig += `M${x} 483v${sell * part}`;
});
setPath("buyAll", buyAll);
setPath("sellAll", sellAll);
setPath("buyBig", buyBig);
setPath("sellBig", sellBig);
setPath("net", quiet + "L" + parse(net).map(q => q.join(" ")).join("L"));
```
